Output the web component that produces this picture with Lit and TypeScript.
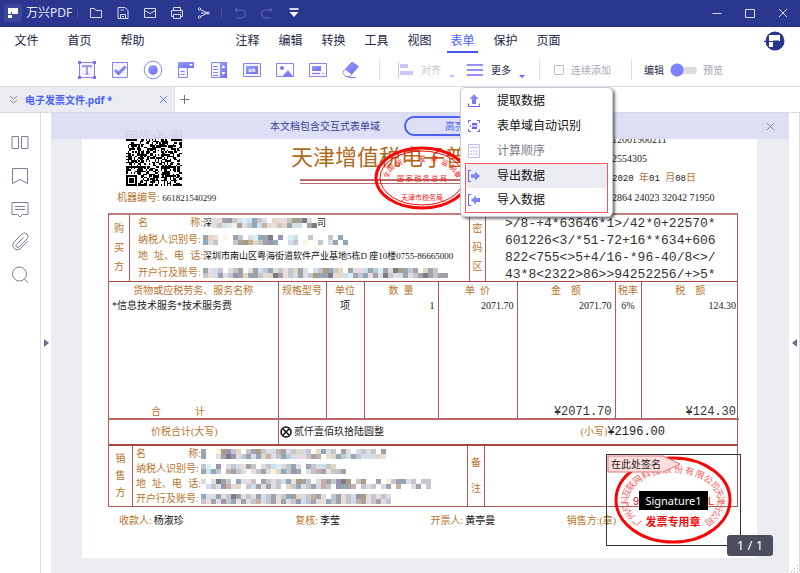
import { LitElement, html, css, svg } from "lit";
import { customElement, property } from "lit/decorators.js";
import { classMap } from "lit/directives/class-map.js";

const sans = css`"Noto Sans", "Noto Sans CJK SC", sans-serif`;

const base = css`
  * { box-sizing: border-box; }
  button { border: 0; background: none; padding: 0; margin: 0; font: inherit; color: inherit; cursor: pointer; display: flex; align-items: center; justify-content: center; }
  a { color: inherit; text-decoration: none; }
  svg { display: block; flex: none; }
`;

const grad = (id: string) => svg`<defs><linearGradient id=${id} x1="0" y1="0" x2="1" y2="1"><stop offset="0" stop-color="#8ea2fb"/><stop offset="1" stop-color="#7468f2"/></linearGradient></defs>`;

/* ---------- icons ---------- */
const titleIcons: Record<string, any> = {
  folder: svg`<path d="M2.500 12.500V3.500h4l1.500 2h5.500v7z"/>`,
  save: svg`<path d="M3 13.500V2.500h7l3 3v8zM5.500 13.500v-4h5v4M5.500 5h3.500M7 11.500h2"/>`,
  mail: svg`<path d="M2.500 3.500h11v9h-11zM2.500 5.500l5.500 3 5.500-3"/>`,
  print: svg`<path d="M4.500 5V2.500h7V5M4.500 11.500h-2v-6h11v6h-2M4.500 9.500h7v4h-7zM11 7.500h1"/>`,
  share: svg`<path d="M4.500 4.500l7 3.500-7 3.500M5 8h5"/><circle cx="3.500" cy="4" r="1.200"/><circle cx="3.500" cy="12" r="1.200"/><circle cx="12" cy="8" r="1.200"/>`,
  undo: svg`<path d="M5.500 2.500l-2.500 2.500 2.500 2.500M3 5h6.500a4 4 0 0 1 0 8H4"/>`,
  redo: svg`<path d="M10.500 2.500l2.500 2.500-2.500 2.500M13 5H6.500a4 4 0 0 0 0 8H12"/>`,
  down: svg`<path d="M3.500 4h9" stroke-width="2"/><path d="M3.500 7h9l-4.500 5z" fill="#fff" stroke="none"/>`,
  min: svg`<path d="M3.500 8.500h9"/>`,
  max: svg`<path d="M3.500 4.500h9v8h-9z"/>`,
  close: svg`<path d="M4 4l8 8M12 4l-8 8"/>`,
};

const formIcons: Record<string, any> = {
  text: svg`<path d="M2.500 2.500h15v15h-15z" fill="#f4f3ff"/><path d="M6 7.500V6h8v1.500M10 6v8M8.500 14h3" stroke-width="1.500"/><path d="M1 1h3v3H1zM16 1h3v3h-3zM1 16h3v3H1zM16 16h3v3h-3z" fill="#7c70f0" stroke="none"/>`,
  check: svg`<path d="M2.500 2.500h15v15h-15z" fill="#f4f3ff"/><path d="M5 10l3.500 3.500L15.500 6.500" stroke="url(#g)" stroke-width="3"/>`,
  radio: svg`<circle cx="10" cy="10" r="8.800" fill="#fff"/><circle cx="10" cy="10" r="4.800" fill="url(#g)" stroke="none"/>`,
  combo: svg`<path d="M2.500 8v9.500h9V8" fill="#f4f3ff"/><path d="M2 2h16v6H2z" fill="url(#g)" stroke="none"/><path d="M13 4h4l-2 2.500z" fill="#fff" stroke="none"/><path d="M4.500 11.500h4M4.500 14.500h4"/>`,
  list: svg`<path d="M2.500 2.500h15v15h-15z" fill="#f4f3ff"/><path d="M11 2h7v16h-7z" fill="url(#g)" stroke="none"/><path d="M12.500 8l2-3 2 3zM12.500 12l2 3 2-3z" fill="#fff" stroke="none"/><path d="M4 6.500h5M4 9.500h5M4 12.500h5M4 15.500h5"/>`,
  ok: svg`<path d="M1.500 3.500h17v13h-17z" fill="#f4f3ff"/><path d="M4 6h12v8H4z" fill="url(#g)" stroke="none"/><text x="10" y="12" text-anchor="middle" font-size="6" font-weight="700" font-family="Noto Sans, sans-serif" fill="#fff" stroke="none">ok</text>`,
  image: svg`<path d="M1.500 3.500h17v13h-17z" fill="#fff"/><circle cx="7" cy="8" r="2" fill="#7c70f0" stroke="none"/><path d="M7 16.500l6-6.500 5 6.500z" fill="url(#g)" stroke="none"/>`,
  date: svg`<path d="M1.500 3.500h17v13h-17z" fill="#fff"/><path d="M4 6h9v5H4z" fill="url(#g)" stroke="none"/><path d="M4 13.500h8M13.500 13.500h1M15.500 13.500h1" stroke-width="1.500"/>`,
  erase: svg`<path d="M11 2l6.500 4.500-7 8-6.500-5z" fill="url(#g)"/><path d="M4 9.500l-2.500 3 3 4h4l2-2" fill="#fff"/><path d="M7 17.500h8"/>`,
};

const menuIcons: Record<string, any> = {
  extract: svg`<path d="M8 1l4.500 5H10v5H6V6H3.500z" fill="url(#g)" stroke="none"/><path d="M2.500 10.500v3h11v-3"/>`,
  detect: svg`<path d="M2.500 5V2.500H5M11 2.500h2.500V5M2.500 11v2.500H5M11 13.500h2.500V11"/><path d="M6 6h5M6 10h5" stroke-width="2"/><path d="M3.500 8h9" stroke-dasharray="2 1"/>`,
  order: svg`<path d="M2.500 1.500h11v13h-11zM4 4.500h8"/><path d="M4.500 8h7M4.500 11h7" stroke-width="1.500" stroke-dasharray="1.500 1.200"/>`,
  out: svg`<path d="M5 2.500H2.500v11H5"/><path d="M5 6h4V3.500L14 8l-5 4.500V10H5z" fill="url(#g)" stroke="none"/>`,
  in: svg`<path d="M5 2.500H2.500v11H5"/><path d="M14 6h-4V3.500L5 8l5 4.500V10h4z" fill="url(#g)" stroke="none"/>`,
};

const sideIcons: Record<string, any> = {
  pages: svg`<path d="M2 3.500h6.500v12H2zM11.500 3.500H18v12h-6.500z"/>`,
  mark: svg`<path d="M2.500 2.500h15v15l-7.500-4-7.500 4z"/>`,
  note: svg`<path d="M2 3.500h16v12h-5.500L10 18l-2.500-2.500H2zM5 7.500h10M5 10.500h10"/>`,
  clip: svg`<path d="M13.500 5.500l-7 7a1.500 1.500 0 0 0 2.500 2.500l8-8a3.300 3.300 0 0 0-5-5l-8.500 8.500a4.700 4.700 0 0 0 6.500 6.500l7.500-7.500"/>`,
  find: svg`<circle cx="9.500" cy="9" r="7"/><path d="M14.500 14l3.500 4"/>`,
};

@customElement("pdf-icon")
class PdfIcon extends LitElement {
  @property() set = "title";
  @property() name = "";
  static styles = css`
    :host { display: block; flex: none; }
    svg { display: block; fill: none; stroke: currentColor; }
  `;
  render() {
    const sets: Record<string, [Record<string, any>, number]> = {
      title: [titleIcons, 16], form: [formIcons, 20], menu: [menuIcons, 16], side: [sideIcons, 20],
    };
    const [icons, size] = sets[this.set];
    return html`<svg width=${size} height=${size} viewBox="0 0 ${size} ${size}" aria-hidden="true">${grad("g")}${icons[this.name]}</svg>`;
  }
}

/* ---------- masked text ---------- */
const tones: Record<string, string> = {
  a: "#dedee0", b: "#c4c6cb", c: "#a2a3aa", d: "#7b7d84", e: "#e6d6c2", f: "#cfdeec",
  g: "#ecdcdc", h: "#fbf3dd", i: "#d6f1f6", j: "#8fa8bc", k: "#aa9d7e", p: "#9a95b0", r: "#c9aea4",
};

@customElement("masked-text")
class MaskedText extends LitElement {
  @property({ attribute: false }) rows: string[] = [];
  static styles = css`:host { display: block; flex: none; } svg { display: block; }`;
  render() {
    const cols = Math.max(...this.rows.map((r) => r.length));
    return html`<svg width=${cols * 5} height=${this.rows.length * 5} aria-hidden="true">
      ${this.rows.map((row, y) => [...row].map((c, x) => tones[c] ? svg`<rect x=${x * 5} y=${y * 5} width="5" height="5" fill=${tones[c]}/>` : null))}
    </svg>`;
  }
}

/* ---------- QR code ---------- */
const qrPath = () => {
  const n = 37;
  const corners = [[0, 0], [n - 7, 0], [0, n - 7]];
  let seed = 20200108;
  let d = "";
  for (let y = 0; y < n; y++) {
    for (let x = 0; x < n; x++) {
      seed = (seed * 1103515245 + 12345) % 2147483648;
      let on = ((seed >> 12) & 255) < 132;
      for (const [cx, cy] of corners) {
        const u = x - cx, v = y - cy;
        if (u >= -1 && u <= 7 && v >= -1 && v <= 7) {
          const ring = Math.max(Math.abs(u - 3), Math.abs(v - 3));
          on = ring === 3 || ring <= 1;
        }
      }
      if (on) d += `M${x} ${y}h1v1h-1z`;
    }
  }
  return { n, d };
};

/* Glyphs centred on an ellipse, angles in degrees clockwise from the top. */
const arc = (text: string, cx: number, cy: number, rx: number, ry: number, from: number, to: number, size: number) => {
  const chars = [...text];
  const xs: string[] = [], ys: string[] = [], rs: string[] = [];
  chars.forEach((_, i) => {
    const t = ((from + ((to - from) * i) / (chars.length - 1)) * Math.PI) / 180;
    const px = cx + rx * Math.sin(t), py = cy - ry * Math.cos(t);
    const rot = Math.atan2(ry * Math.sin(t), rx * Math.cos(t));
    const half = size / 2, drop = size * 0.38;
    xs.push((px - half * Math.cos(rot) - drop * Math.sin(rot)).toFixed(1));
    ys.push((py - half * Math.sin(rot) + drop * Math.cos(rot)).toFixed(1));
    rs.push(((rot * 180) / Math.PI).toFixed(0));
  });
  return svg`<text x=${xs.join(" ")} y=${ys.join(" ")} rotate=${rs.join(" ")} font-size=${size}>${text}</text>`;
};

/* ---------- invoice page ---------- */
@customElement("invoice-page")
class InvoicePage extends LitElement {
  static styles = [base, css`
    :host { display: block; position: relative; background: #fff; padding: 16px 19px 30px 26px; color: #222; font: 10px/14px "Liberation Serif", "Noto Sans CJK SC", serif; }
    .tan { color: #b8742e; }
    .mono { font-family: "Liberation Mono", monospace; }
    header { display: grid; grid-template-columns: 183px 1fr 126px; height: 84px; }
    .code { padding-left: 9px; }
    .code svg { margin: 1px 0 5px 9px; }
    .small { font-size: 9px; }
    .title { position: relative; width: 242px; padding-top: 13px; }
    h1 { margin: 0; font: 400 22px/32px "Liberation Serif", "Noto Sans CJK SC", serif; color: #b06a20; white-space: nowrap; }
    .rule { height: 5px; margin: 5px 9px 0; border: solid #b96a6a; border-width: 2px 0 1px; }
    .seal { position: absolute; left: 83px; top: 16px; }
    .info { display: flex; flex-direction: column; gap: 5px; padding-top: 4px; white-space: nowrap; }
    .info .mono { font-size: 9px; }
    .frame { border: 1px solid #b05a5a; border-top: 2px solid #c27c7c; }
    .band { display: grid; border-bottom: 1px solid #a84444; }
    .band > * { border-left: 1px solid #b05a5a; min-width: 0; }
    .band > :first-child { border-left: 0; }
    .buyer { grid-template-columns: 20px 340px 16px 1fr; height: 67px; }
    .seller { grid-template-columns: 23px 335px 17px 1fr; height: 61px; border-bottom: 0; border-top: 1px solid #a84444; }
    .total { grid-template-columns: 169px 1fr; height: 25px; align-items: stretch; }
    .total > * { display: flex; align-items: center; }
    .vert { display: flex; flex-direction: column; align-items: center; justify-content: space-around; padding: 4px 0; color: #b8742e; }
    .rows { margin: 0; padding: 0 8px; display: flex; flex-direction: column; justify-content: space-around; overflow: hidden; }
    .seller .rows { padding-left: 3px; }
    .row { display: flex; align-items: center; white-space: nowrap; }
    dt { width: 65px; display: flex; justify-content: space-between; color: #b8742e; }
    dd { margin: 0; display: flex; align-items: center; font-size: 9px; color: #111; }
    .cipher { padding-left: 19px; font: 13px/17px "Liberation Mono", monospace; color: #333; white-space: pre; overflow: hidden; }
    table { width: 100%; border-collapse: collapse; table-layout: fixed; }
    th, td { font-weight: 400; padding: 0 3px; border-left: 1px solid #b05a5a; white-space: nowrap; vertical-align: top; text-align: right; }
    th { color: #b8742e; text-align: center; height: 17px; line-height: 17px; white-space: pre; }
    th:first-child, td:first-child { border-left: 0; }
    td.left { text-align: left; }
    th, td.mid { text-align: center; padding: 0; }
    tbody td { height: 101px; }
    tfoot td { height: 19px; vertical-align: bottom; font: 12px/12px "Liberation Mono", monospace; color: #333; }
    tfoot td.sum { font: 10px/14px "Noto Sans CJK SC", sans-serif; color: #b8742e; text-align: left; padding-left: 42px; }
    .sum span + span { margin-left: 34px; }
    .items { border-bottom: 2px solid #b86868; }
    .in { padding-left: 42px; }
    .words { padding-left: 1px; gap: 2px; }
    .amount { margin-left: auto; padding-right: 72px; display: flex; align-items: center; }
    .amount .mono { font-size: 12px; }
    footer { display: grid; grid-template-columns: 176fr 135fr 136fr 171fr; padding: 7px 0 0 11px; }
    footer b { font-weight: 400; color: #111; margin-left: 2px; }
    .sign { position: absolute; right: 16px; bottom: 12px; width: 135px; height: 92px; border: 1px solid #333; }
    .name { position: absolute; left: 32px; top: 36px; width: 69px; height: 19px; background: #000; color: #fff; font: 11px/19px "Noto Sans", sans-serif; }
  `];

  row(label: string[], content: any) {
    return html`<div class="row"><dt>${label.map((l) => html`<span>${l}</span>`)}</dt><dd>${content}</dd></div>`;
  }

  render() {
    const qr = qrPath();
    const mask = (...rows: string[]) => html`<masked-text .rows=${rows}></masked-text>`;
    return html`
      <header>
        <div class="code">
          <svg width="56" height="56" viewBox="0 0 ${qr.n} ${qr.n}" role="img" aria-label="QR" shape-rendering="crispEdges"><path d=${qr.d} fill="#000"/></svg>
          <span class="tan">机器编号: </span><span class="small">661821540299</span>
        </div>
        <div class="title">
          <h1>天津增值税电子普通发票</h1>
          <div class="rule"></div>
          <svg class="seal" width="96" height="66" fill="#f01818" font-family="Noto Sans CJK SC, sans-serif">
            <ellipse cx="48" cy="33" rx="46" ry="30" fill="none" stroke="#f80808" stroke-width="3"/>
            <ellipse cx="48" cy="33" rx="42" ry="27" fill="none" stroke="#f80808"/>
            ${arc("全国统一发票监制章", 48, 33, 36, 20, -80, 80, 7)}
            <text x="48" y="36" text-anchor="middle" font-size="7" xml:space="preserve">国 家 税 务 总 局</text>
            <text x="48" y="55" text-anchor="middle" font-size="7">天津市税务局</text>
          </svg>
        </div>
        <div class="info">
          <span>12001900211</span>
          <span>2554305</span>
          <span><span class="mono">2020 </span><span class="tan">年</span><span class="mono">01 </span><span class="tan">月</span><span class="mono">08</span><span class="tan">日</span></span>
          <span>2864 24023 32042 71950</span>
        </div>
      </header>

      <div class="frame">
        <div class="band buyer">
          <div class="vert"><span>购</span><span>买</span><span>方</span></div>
          <dl class="rows">
            ${this.row(["名", "称:"], html`深${mask("agcpbaifjba.eagbkcda", "gbaihcabjfragbecaf.cd")}司`)}
            ${this.row(["纳税人识别号:"], mask("ceg.h.cb.aijcd.p.if..b...b.j", "jab...bckrebcpj..fb.h..b.fc.j"))}
            ${this.row(["地", "址、电", "话:"], "深圳市南山区粤海街道软件产业基地5栋D 座10楼0755-86665000")}
            ${this.row(["开户行及账号:"], mask("cgfb.abc.gcfbjabgbeca.fbkjbe.cagfjbicadkjbc.ecb", "bgfcabpcejcbaedcgbfcabkjcdaeficbjgcadbgfcabcdcbcc"))}
          </dl>
          <div class="vert"><span>密</span><span>码</span><span>区</span></div>
          <div class="cipher">${">/8-+4*63646*1>/42*0+22570*\n601226<3/*51-72+16**634+606\n822<755<>5+4/16-*96-40/8<>/\n43*8<2322>86>>94252256/+>5*"}</div>
        </div>

        <table class="items">
          <colgroup>${[169, 48, 38, 74, 79, 98, 26, 98].map((w) => html`<col style="width:${w}px">`)}</colgroup>
          <thead><tr><th>货物或应税劳务、服务名称</th><th>规格型号</th><th>单位</th><th>数  量</th><th>单  价</th><th>金    额</th><th>税率</th><th>税    额</th></tr></thead>
          <tbody><tr><td class="left">*信息技术服务*技术服务费</td><td></td><td class="mid">项</td><td>1</td><td>2071.70</td><td>2071.70</td><td class="mid">6%</td><td>124.30</td></tr></tbody>
          <tfoot><tr><td class="sum"><span>合</span><span>计</span></td><td></td><td></td><td></td><td></td><td>¥2071.70</td><td></td><td>¥124.30</td></tr></tfoot>
        </table>

        <div class="band total">
          <div class="in tan">价税合计(大写)</div>
          <div class="words">
            <svg width="12" height="12" fill="none" stroke="#111" stroke-width="1.500"><circle cx="6" cy="6" r="5"/><path d="M3 3l6 6M9 3l-6 6"/></svg>
            <span>贰仟壹佰玖拾陆圆整</span>
            <span class="amount"><span class="tan">(小写)</span><span class="mono">¥2196.00</span></span>
          </div>
        </div>

        <div class="band seller">
          <div class="vert"><span>销</span><span>售</span><span>方</span></div>
          <dl class="rows">
            ${this.row(["名", "称:"], mask("c..hkpbe.bckbafrcabefb.ejab.ca.fbab.c", "j..acdpabcfjerabjbfagbcr.aejbfjbafaeg"))}
            ${this.row(["纳税人识别号:"], mask("bi.p.abfgcb.abfiabjg.cbafbe", "cfjb.rcba.gbcahejbpc.abrcgbbc"))}
            ${this.row(["地", "址、电", "话:"], mask("a.adcb.jagb.cbabfjgkcb.arcbpdk.bk..c.hbcjab.bb", ".fbaprae.bfcgcab.ebjabcfrb.pjcr.bab.fc.r..ac.b"))}
            ${this.row(["开户行及账号:"], mask("jafcabdcgbacfbcabjcefbrca.bcgbfpkabgbf", "bgcapbjgcabrfbcgcabpfbcagjbcabfrcgbcab"))}
          </dl>
          <div class="vert"><span>备</span><span>注</span></div>
          <div></div>
        </div>
      </div>

      <footer>
        <span class="tan">收款人:<b>杨淑珍</b></span>
        <span class="tan">复核:<b>李莹</b></span>
        <span class="tan">开票人:<b>黄亭曼</b></span>
        <span class="tan">销售方:(章)</span>
      </footer>

      <div class="sign">
        <svg width="133" height="90" fill="#f26060" font-family="Noto Sans CJK SC, sans-serif">
          <ellipse cx="66" cy="45" rx="57" ry="42" fill="none" stroke="#fa0505" stroke-width="3"/>
          ${arc("广州凡科互联网科技股份有限公司天津分公司", 66, 46, 48, 32, -130, 130, 9)}
          <g fill="#f01010">
            <text x="26" y="50" font-size="11" font-family="Liberation Sans, sans-serif">9</text>
            <text x="101" y="50" font-size="11" font-family="Liberation Sans, sans-serif">L</text>
            <text x="66" y="71" text-anchor="middle" font-size="11" font-weight="700">发票专用章</text>
          </g>
          <path d="M1 1h55l17 8-17 8H1z" fill="#fddede" stroke="#d87878"/>
          <text x="4" y="13" font-size="10" fill="#222">在此处签名</text>
        </svg>
        <button class="name">Signature1</button>
      </div>
    `;
  }
}

/* ---------- application ---------- */
@customElement("app-root")
class AppRoot extends LitElement {
  static styles = [base, css`
    :host { display: flex; flex-direction: column; min-height: 100vh; background: #fff; color: #23264a; font: 12px/16px ${sans}; overflow: hidden; }
    .bar { display: flex; align-items: center; }
    .titlebar { height: 27px; background: #2a378f; color: #fff; padding: 0 9px 0 4px; border-bottom: 1px solid #243083; }
    .logo { width: 18px; height: 18px; border-radius: 3px; background: #3b479b; display: flex; align-items: center; justify-content: center; margin-right: 4px; }
    .app { width: 47px; white-space: nowrap; color: #e4e6f5; }
    .titlebar .line { width: 1px; height: 10px; background: #47529f; margin: 0 4px; }
    .titlebar button { width: 27px; height: 26px; color: #d5d9f0; }
    .titlebar .dim { color: #616bb0; }
    .win { margin-left: auto; display: flex; }
    .titlebar .win button { width: 33px; }
    .titlebar .win button:last-child { margin-right: -8px; }
    .menubar { height: 27px; padding: 0 15px 0 0; }
    .menubar a { height: 26px; line-height: 26px; text-align: center; width: 53px; white-space: nowrap; }
    .tabs { display: flex; margin-left: 67px; }
    .tabs a { width: 43px; }
    .tabs .on { color: #4a62f6; }
    .tabs .on::after { content: ""; display: block; height: 2px; margin: -3px 6px 0; background: #4a55f0; }
    .account { margin-left: auto; }
    .tools { height: 33px; padding-left: 70px; border-bottom: 1px solid #dcdde6; font-size: 10px; }
    .tools .form { width: 33px; height: 32px; color: #8a84ee; }
    .sep { width: 1px; height: 20px; background: #dcdcec; }
    .gap12 { margin-left: 12px; }
    .gap14 { margin-left: 14px; }
    .gap18 { margin-left: 18px; }
    .gap20 { margin-left: 20px; }
    .group { position: relative; display: flex; align-items: center; }
    .group button { gap: 8px; height: 32px; }
    .faded { color: #c3c3d2; }
    .caret { border: 3px solid transparent; border-top-color: #6a5cf5; border-bottom: 0; margin-top: 13px; }
    .faded .caret { border-top-color: #c9c3fb; }
    .menu { position: absolute; z-index: 5; left: -7px; top: 33px; width: 153px; padding: 0 4px 3px; background: #fff; border: 1px solid #c9cad6; border-radius: 5px; box-shadow: 2px 2px 3px #0008; color: #111; font-size: 12px; }
    .group .menu button { width: 100%; height: 25px; padding-left: 1px; gap: 15px; justify-content: flex-start; color: inherit; white-space: nowrap; }
    .menu pdf-icon { color: #6a5cf5; }
    .group .menu .off { color: #7b7d85; }
    .menu .off pdf-icon { color: #c0bcf8; }
    .box { border: 1px solid #f25a62; }
    .group .menu .hot { background: #ebecf1; border-radius: 4px; }
    .group .menu .box button { height: 24px; padding-left: 0; }
    .check { display: flex; align-items: center; gap: 7px; color: #a9aab4; white-space: nowrap; }
    .check input { appearance: none; width: 10px; height: 10px; margin: 0; border: 1px solid #b9bac6; border-radius: 1px; }
    .mode { display: flex; align-items: center; gap: 6px; white-space: nowrap; }
    .mode input { appearance: none; width: 27px; height: 14px; margin: 0; background: radial-gradient(circle at 7px 7px, #7f82fb 6px, transparent 7px), linear-gradient(#dcdcdf, #dcdcdf) 10px 4px / 17px 7px no-repeat; border-radius: 7px; }
    .mode .gray { color: #a0a1ac; }
    .docs { height: 26px; border-bottom: 1px solid #d9dae4; }
    .doc { width: 175px; height: 25px; background: #ebecf2; display: flex; align-items: center; padding: 0 6px 0 9px; border-right: 1px solid #dfe0e8; color: #4a62f6; font-size: 10px; font-weight: 700; }
    .doc span { flex: 1; margin-left: 7px; }
    .add { width: 18px; height: 25px; color: #777; }
    main { flex: 1; display: flex; min-height: 0; }
    aside { width: 41px; border-right: 1px solid #dcdde5; padding-top: 20px; color: #7c7e9c; display: flex; flex-direction: column; align-items: center; gap: 13px; }
    .gutter { width: 10px; display: flex; flex-direction: column; align-items: center; justify-content: center; color: #6a6c8c; position: relative; }
    .right { width: 11px; border-right: 1px solid #dcdde5; }
    .grip { position: absolute; right: 0; bottom: 0; }
    .viewer { flex: 1; position: relative; background: #ebecf2; min-width: 0; }
    invoice-page { margin: 0 32px 0 31px; }
    .notice { position: absolute; z-index: 2; left: 0; right: 0; top: 0; height: 26px; background: #dcdff4f5; display: flex; align-items: center; padding: 0 14px 0 219px; font-size: 10px; color: #3b4293; white-space: nowrap; }
    .pill { margin-left: 24px; width: 132px; height: 20px; border: 2px solid #4a62f6; border-radius: 10px; color: #4a62f6; }
    .x { margin-left: auto; color: #777a95; }
    .count { position: absolute; right: 16px; bottom: 17px; width: 46px; height: 21px; border-radius: 3px; background: #4c4e5b; color: #fff; font: 13px/21px "Noto Sans", sans-serif; text-align: center; }
  `];

  tbtn(name: string, cls = "") {
    return html`<button class=${cls} aria-label=${name}><pdf-icon name=${name}></pdf-icon></button>`;
  }

  item(icon: string, label: string, cls = "") {
    return html`<button class=${cls} role="menuitem"><pdf-icon set="menu" name=${icon}></pdf-icon>${label}</button>`;
  }

  render() {
    return html`
      <header class="bar titlebar">
        <span class="logo"><svg width="12" height="12" fill="#fff"><path d="M1 1h10v6H5V5H4v2H1zM1 8h4v3H1z"/></svg></span>
        <span class="app">万兴PDF</span><span class="line"></span>
        ${["folder", "save", "mail", "print", "share"].map((n) => this.tbtn(n))}
        <span class="line"></span>
        ${this.tbtn("undo", "dim")}${this.tbtn("redo", "dim")}${this.tbtn("down")}
        <span class="win">${this.tbtn("min")}${this.tbtn("max")}${this.tbtn("close")}</span>
      </header>

      <nav class="bar menubar">
        ${["文件", "首页", "帮助"].map((t) => html`<a href="#">${t}</a>`)}
        <span class="tabs">${["注释", "编辑", "转换", "工具", "视图", "表单", "保护", "页面"].map((t) => html`<a href="#" class=${classMap({ on: t === "表单" })}>${t}</a>`)}</span>
        <svg class="account" width="21" height="20"><circle cx="11" cy="10" r="9.500" fill="#2a378f"/><path d="M4 4h12v6H9v6H5v-5H4z" fill="#fff"/><path d="M0 10.500h10M4.500 4v6M9 10h6" stroke="#2a378f" fill="none"/></svg>
      </nav>

      <section class="bar tools">
        ${Object.keys(formIcons).map((n) => html`<button class="form" aria-label=${n}><pdf-icon set="form" name=${n}></pdf-icon></button>`)}
        <span class="sep gap12"></span>
        <div class="group gap18">
          <button class="faded">
            <svg width="15" height="16" fill="#c9c6f8"><path d="M0 0h1v16H0zM2 2h8v4H2zM2 9h13v4H2z"/></svg>对齐<span class="caret"></span>
          </button>
        </div>
        <div class="group gap12">
          <button aria-haspopup="menu">
            <svg width="16" height="12" stroke="#7468f2" stroke-width="1.500"><path d="M0 1h16M0 6h16M0 11h16"/></svg>更多<span class="caret"></span>
          </button>
          <div class="menu" role="menu">
            ${this.item("extract", "提取数据")}
            ${this.item("detect", "表单域自动识别")}
            ${this.item("order", "计算顺序", "off")}
            <div class="box">${this.item("out", "导出数据", "hot")}${this.item("in", "导入数据")}</div>
          </div>
        </div>
        <span class="sep gap14"></span>
        <label class="check gap14"><input type="checkbox">连续添加</label>
        <span class="sep gap20"></span>
        <label class="mode gap12"><span>编辑</span><input type="checkbox" role="switch"><span class="gray">预览</span></label>
      </section>

      <section class="bar docs">
        <div class="doc">
          <svg width="9" height="10" fill="none" stroke="#888ba0"><path d="M1 1l3.500 3L8 1M1 5l3.500 3L8 5"/></svg>
          <span>电子发票文件.pdf *</span>
          <button aria-label="close tab"><svg width="9" height="9" stroke="#6a7cf5"><path d="M1 1l7 7M8 1L1 8"/></svg></button>
        </div>
        <button class="add" aria-label="new tab"><svg width="9" height="9" stroke="#777"><path d="M0 4.500h9M4.500 0v9"/></svg></button>
      </section>

      <main>
        <aside>${Object.keys(sideIcons).map((n) => html`<button aria-label=${n}><pdf-icon set="side" name=${n}></pdf-icon></button>`)}</aside>
        <div class="gutter"><svg width="5" height="8" fill="#6a6c8c"><path d="M0 0l5 4-5 4z"/></svg></div>
        <div class="viewer">
          <div class="notice">
            <span>本文档包含交互式表单域</span>
            <button class="pill">高亮表单域</button>
            <button class="x" aria-label="close notice"><svg width="9" height="9" stroke="#85879c"><path d="M1 1l7 7M8 1L1 8"/></svg></button>
          </div>
          <invoice-page></invoice-page>
          <div class="count">1 / 1</div>
        </div>
        <div class="gutter right">
          <svg width="5" height="8" fill="#6a6c8c"><path d="M5 0L0 4l5 4z"/></svg>
          <svg class="grip" width="8" height="8" fill="#aaacbc"><path d="M6 0h1v1H6zM3 3h1v1H3zM6 3h1v1H6zM0 6h1v1H0zM3 6h1v1H3zM6 6h1v1H6z"/></svg>
        </div>
      </main>
    `;
  }
}
